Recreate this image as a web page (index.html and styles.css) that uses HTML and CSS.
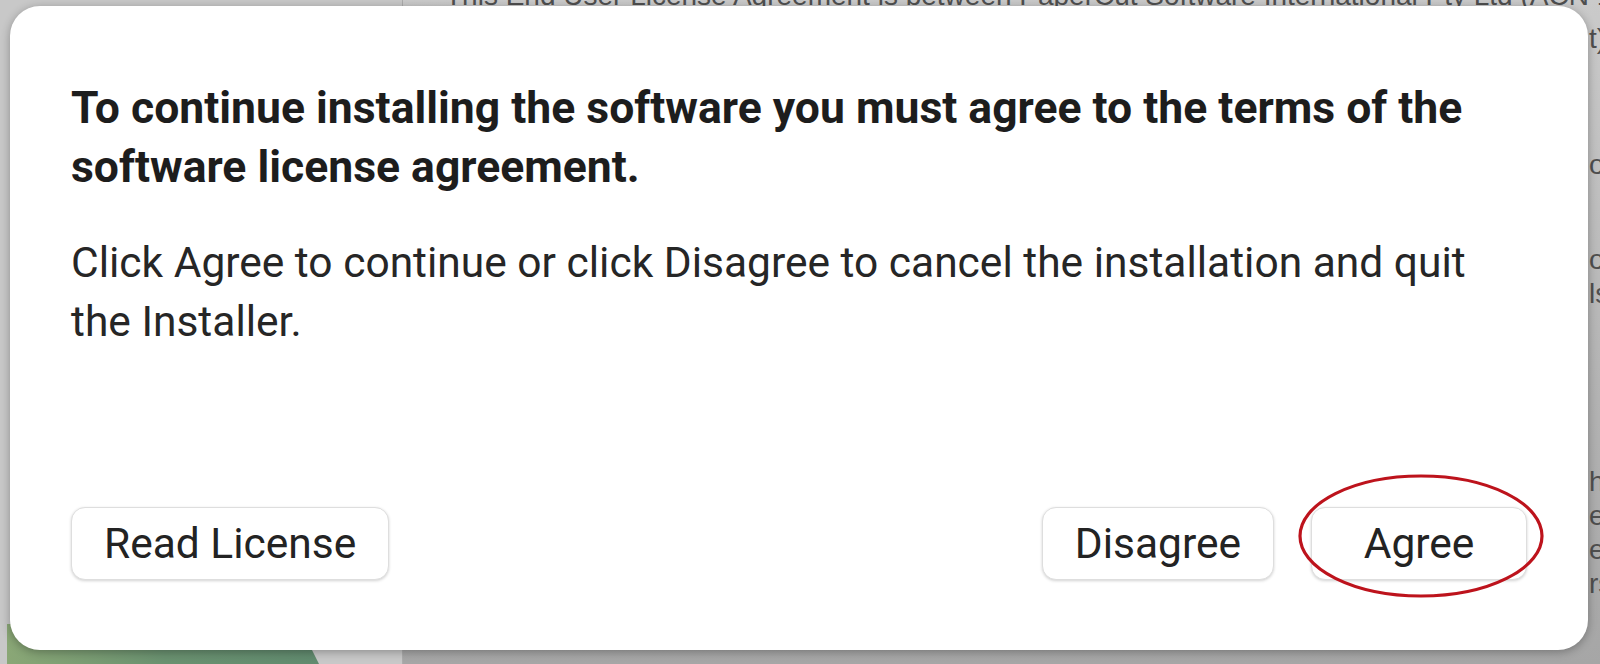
FILE: index.html
```html
<!DOCTYPE html>
<html lang="en">
<head>
  <meta charset="UTF-8" />
  <meta name="viewport" content="width=device-width, initial-scale=1.0">
  <title>Install PaperCut</title>
  <link rel="stylesheet" href="styles.css">
</head>
<body>
  <!-- installer window behind the sheet -->
  <div class="window">
    <aside class="sidebar">
      <div class="artwork"></div>
    </aside>
    <main class="doc">
      <p class="doc-first">This End User License Agreement is between PaperCut Software International Pty Ltd (ACN 131 207 384)</p>
      <!-- line ends that peek out beside the sheet -->
      <div class="doc-edge">
        <p>t)</p>
        <p>o</p>
        <p>o<br>ls</p>
        <p>h<br>e<br>e<br>rs</p>
      </div>
    </main>
  </div>

  <div class="sheet">
    <h1 class="sheet-title">To continue installing the software you must agree to the terms of the software license agreement.</h1>
    <p class="sheet-text">Click Agree to continue or click Disagree to cancel the installation and quit the Installer.</p>

    <div class="sheet-buttons">
      <button class="btn">Read License</button>
      <button class="btn push">Disagree</button>
      <button class="btn">Agree</button>
    </div>
  </div>

  <!-- hand drawn mark around the Agree button -->
  <svg class="callout" width="252" height="128" viewBox="0 0 252 128">
    <ellipse cx="126" cy="64" rx="121" ry="60" fill="none" stroke="#bd131c" stroke-width="3.2" />
  </svg>
</body>
</html>
```

FILE: styles.css
```css
body {
  margin: 0;
  overflow: hidden;
  background: #bdbdbd;
}
.window {
  display: flex;
  height: 664px;
}
.sidebar {
  width: 402px;
  background: #c8c8c8;
  border-right: 1px solid #acacac;
  display: flex;
  flex-direction: column;
  justify-content: flex-end;
}
.artwork {
  height: 40px;
  margin-left: 7px;
  background: linear-gradient(90deg, #8aa776, #6a9170 40%, #5c876e);
  clip-path: polygon(0 0, 292px 0, 312px 100%, 0 100%);
}
.doc {
  flex: 1;
  display: flex;
  flex-direction: column;
  padding-left: 42px;
  overflow: hidden;
  background: linear-gradient(#cacaca, #b3b3b3 60%, #a6a6a6);
  font: 28px/34px "Liberation Sans", Arial, sans-serif;
  color: #4f4f4f;
}
.doc p {
  margin: 0;
}
.doc-first {
  margin-top: -21px !important;
  white-space: nowrap;
}
.doc-edge {
  align-self: flex-end;
  width: 11px;
  white-space: nowrap;
}
.doc-edge p:nth-child(1) { margin-top: 9px; }
.doc-edge p:nth-child(2) { margin-top: 92px; }
.doc-edge p:nth-child(3) { margin-top: 61px; }
.doc-edge p:nth-child(4) { margin-top: 154px; }

.sheet {
  position: absolute;
  left: 10px;
  top: 6px;
  width: 1578px;
  height: 644px;
  box-sizing: border-box;
  padding: 73px 61px 70px;
  display: flex;
  flex-direction: column;
  background: #fff;
  border-radius: 30px;
  box-shadow: 0 2px 10px rgba(0, 0, 0, 0.3);
  font-family: Roboto, "Noto Sans", sans-serif;
}
.sheet-title {
  max-width: 1420px;
  margin: 0;
  font-size: 44.5px;
  font-weight: 700;
  line-height: 59px;
  color: #1d1d1d;
}
.sheet-text {
  max-width: 1420px;
  margin: 36px 0 0;
  font-size: 42.5px;
  line-height: 59px;
  color: #262626;
}
.sheet-buttons {
  margin-top: auto;
  display: flex;
  align-items: center;
  gap: 37px;
}
.btn {
  height: 73px;
  min-width: 216px;
  padding: 0 32px;
  font-family: inherit;
  font-size: 42.5px;
  color: #232323;
  background: #fff;
  border: 1px solid #dedede;
  border-radius: 14px;
  box-shadow: 0 1px 3px rgba(0, 0, 0, 0.18);
}
.push {
  margin-left: auto;
}
.callout {
  position: absolute;
  left: 1295px;
  top: 472px;
}
```
